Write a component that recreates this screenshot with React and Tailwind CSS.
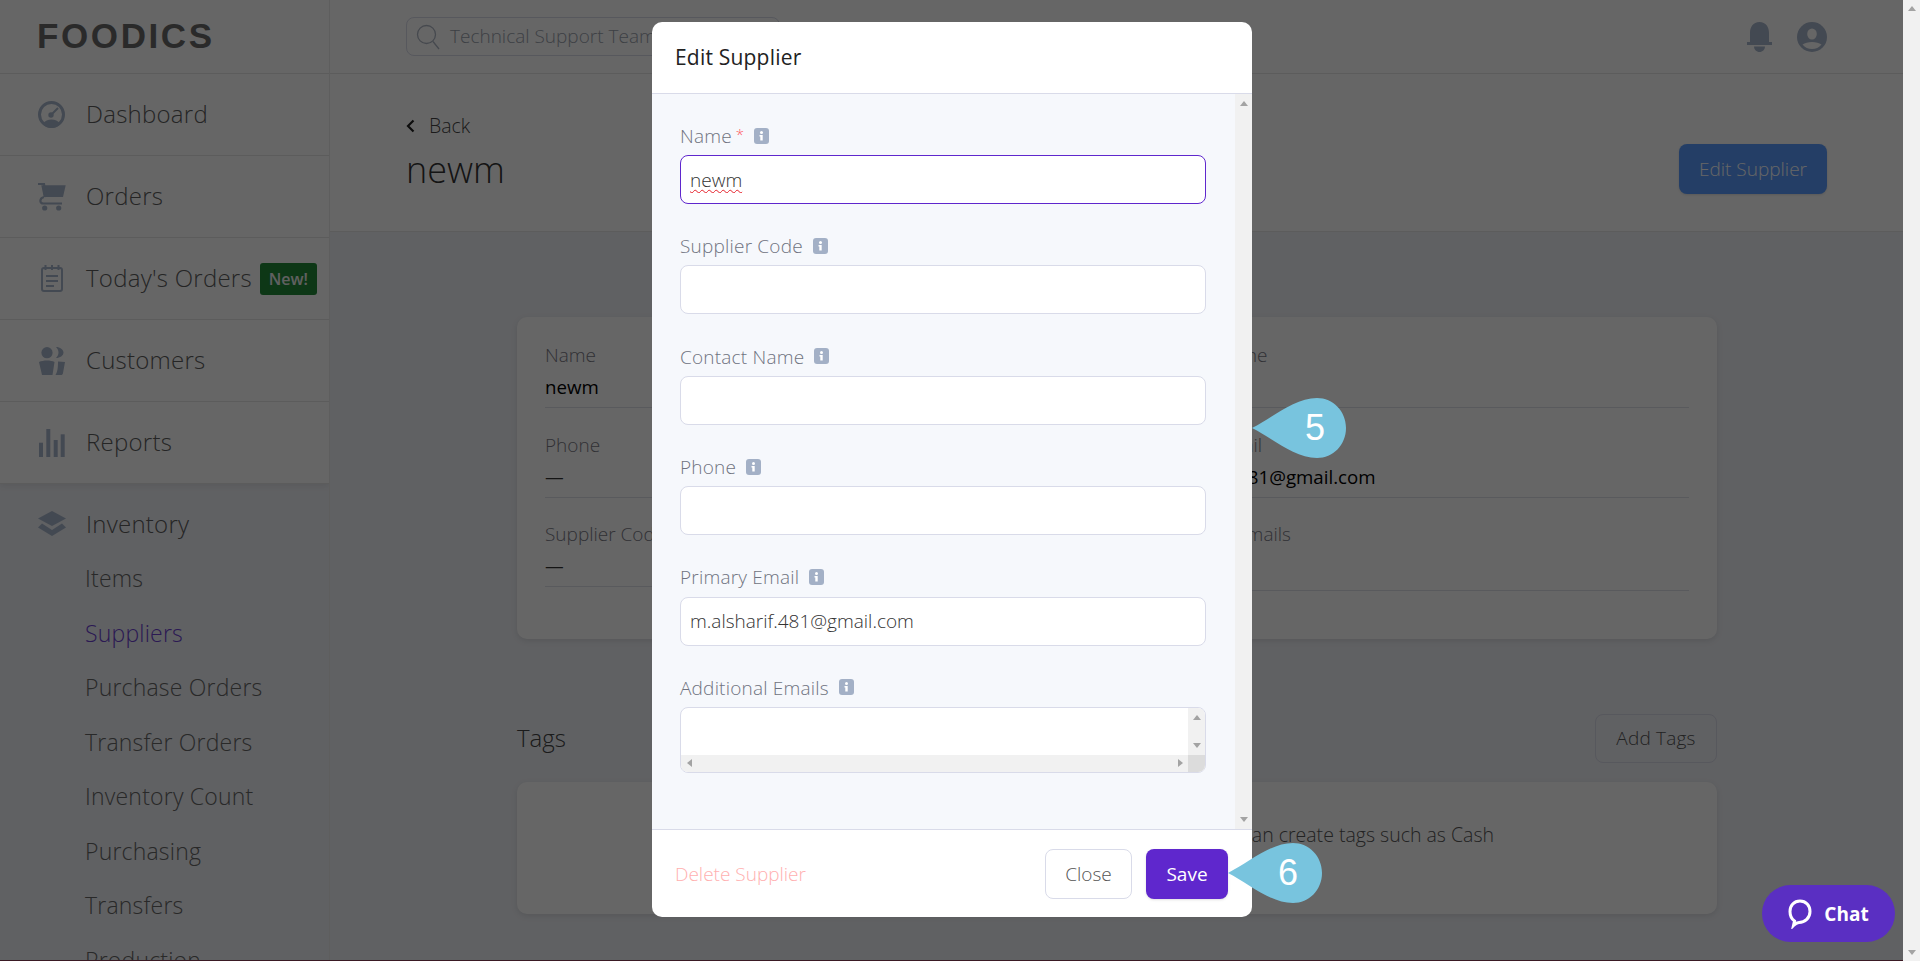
import React from 'react'

const font = { fontFamily: '"Open Sans", sans-serif' }

function InfoIcon() {
    return (
        <svg width="15" height="16" viewBox="0 0 15 16" className="shrink-0">
            <rect width="15" height="16" rx="3" fill="#a3b0c6" />
            <circle cx="7.5" cy="4.4" r="1.5" fill="#fff" />
            <path d="M5.5 7h3.2v5.6h-2.4V8.4H5.5z" fill="#fff" />
        </svg>
    )
}

function DashboardIcon() {
    return (
        <svg width="28" height="28" viewBox="0 0 28 28" fill="none">
            <circle cx="13.500" cy="13.500" r="12" stroke="#a8b6cc" strokeWidth="3" />
            <path d="M5 23c2-3.500 5-4.500 8.500-4.500S20 19.500 22 23c-2.500 3-5.500 4-8.500 4S7.500 26 5 23z" fill="#a8b6cc" />
            <path d="M13 14l7-7" stroke="#a8b6cc" strokeWidth="2" />
            <circle cx="13" cy="14" r="2.700" fill="#a8b6cc" />
        </svg>
    )
}

function CartIcon() {
    return (
        <svg width="28" height="28" viewBox="0 0 28 28" fill="none">
            <path d="M3.300 2.300H27.700L25 14H5.700z" fill="#a8b6cc" />
            <path d="M0 1h6l2 13M6 14c-4.500 1-5 6.500-.5 6.500H24" stroke="#a8b6cc" strokeWidth="2.200" />
            <circle cx="6.700" cy="25" r="2.600" fill="#a8b6cc" />
            <circle cx="20.700" cy="25" r="2.600" fill="#a8b6cc" />
        </svg>
    )
}

function TodayIcon() {
    return (
        <svg width="22" height="28" viewBox="0 0 22 28" fill="none" stroke="#a8b6cc" strokeWidth="2">
            <rect x="1" y="3" width="20" height="23" rx="2" />
            <path d="M4.500 0v5M11 0v5M17.500 0v5M5 11h12M5 16h12M5 21h8" />
        </svg>
    )
}

function CustomersIcon() {
    return (
        <svg width="26" height="28" viewBox="0 0 26 28" fill="#a8b6cc">
            <circle cx="8" cy="5.700" r="5.600" />
            <path d="M17 0c4 0 7.500 2.500 7.500 5.500S21 11 17 11c1.500-1.500 2.500-3.500 2.500-5.500S18.500 1.500 17 0z" />
            <path d="M0 15c4-2 12-2 15.500 0l-2 13H3z" />
            <path d="M19 14.500l7 .5-2 11c-.2 1.500-1 2-2 2h-5.500c2-3 2.500-7 2.500-13.500z" />
        </svg>
    )
}

function ReportsIcon() {
    return (
        <svg width="26" height="28" viewBox="0 0 26 28" fill="#a8b6cc">
            <rect x="0" y="13.700" width="4" height="14.300" />
            <rect x="7.300" y="0" width="4" height="28" />
            <rect x="14.700" y="11" width="4" height="17" />
            <rect x="21.700" y="5.300" width="4" height="22.700" />
        </svg>
    )
}

function LayersIcon() {
    return (
        <svg width="28" height="25" viewBox="0 0 28 25" fill="#a8b6cc">
            <path d="M14 0l14 7.500-14 7.500L0 7.500z" />
            <path d="M4 12.500L0 16.500 14 25l14-8.500-4-4L14 19z" />
        </svg>
    )
}

function Teardrop({ digit, digitClass }) {
    return (
        <>
            <svg width="94" height="60" viewBox="0 0 94 60">
                <path d="M0 30C20 20 42 0 65 0c16 0 29 13 29 30S81 60 65 60C42 60 20 40 0 30z" fill="#78c4de" />
            </svg>
            <span className={`absolute top-[9px] w-[36px] text-center text-[36px] leading-[42px] text-white ${digitClass}`} style={{ fontFamily: '"Liberation Sans", sans-serif' }}>{digit}</span>
        </>
    )
}

function NavRow({ icon, label, badge }) {
    return (
        <div className="flex h-[82px] items-center border-b border-[#e6e6e6]">
            <div className="flex w-[86px] shrink-0 justify-start pl-[38px]">{icon}</div>
            <span className="-mt-[2px] text-[24px] font-light tracking-[0.25px] text-[#5c5c5c]">{label}</span>
            {badge && (
                <span className="ml-[8px] flex h-[32px] w-[57px] items-center justify-center rounded-[3px] bg-[#218a39] text-[16px] font-semibold text-[#f0f0f0]">{badge}</span>
            )}
        </div>
    )
}

function SubRow({ label, active }) {
    return (
        <div className={`flex h-[54.5px] shrink-0 items-center pl-[85px] text-[23px] font-light tracking-[0.2px] ${active ? 'text-[#6b3fd0]' : 'text-[#666666]'}`}>
            {label}
        </div>
    )
}

function InfoCell({ label, value, dark, tall }) {
    return (
        <div className={`mb-[25.500px] border-b border-[#dfe0e8] ${tall ? 'h-[68px]' : 'h-[64px]'}`}>
            <div className="h-[22px] text-[19px] font-light leading-[22px] text-[#7a7a85]">{label}</div>
            <div className={`mt-[10px] h-[22px] text-[18.700px] leading-[22px] ${dark ? 'text-black' : 'text-[#333]'}`}>{value}</div>
        </div>
    )
}

function Field({ label, required, children }) {
    return (
        <div className="mb-[31.400px]">
            <div className="mb-[6px] flex h-[24px] items-center text-[19px] font-light tracking-[0.2px] text-[#6f7380]">
                <span className="-mt-[2px]">{label}</span>
                {required && <span className="ml-[4px] -mt-[5px] text-[15px] text-[#ff5a5f]">*</span>}
                <span className="ml-[10px] -mt-[3px]"><InfoIcon /></span>
            </div>
            {children}
        </div>
    )
}

function TextInput({ value, focused }) {
    return (
        <input
            readOnly
            value={value || ''}
            className={`block h-[49px] w-full rounded-[8px] border bg-white px-[9px] text-[19px] font-light text-[#333] outline-none ${focused ? 'border-[#5f27cd] underline decoration-wavy decoration-[#e5202a] decoration-1 underline-offset-2' : 'border-[#d9dbe9]'}`}
        />
    )
}

function App() {
    return (
        <div className="relative flex h-[961px] w-full overflow-hidden bg-white" style={font}>
            <div className="relative flex min-w-0 flex-1">
                <aside className="flex h-[961px] w-[330px] shrink-0 flex-col overflow-hidden border-r border-[#ebebeb] bg-[#f0f2f7]">
                    <div className="bg-white shadow-[0_2px_6px_rgba(0,0,0,0.08)]">
                        <div className="flex h-[74px] items-center border-b border-[#e6e6e6] pl-[37px]">
                            <span className="-mt-[2px] text-[35px] font-extrabold leading-none tracking-[2.600px] text-[#6a6a6a]" style={{ fontFamily: '"Liberation Sans", sans-serif' }}>FOODICS</span>
                        </div>
                        <NavRow icon={<DashboardIcon />} label="Dashboard" />
                        <NavRow icon={<CartIcon />} label="Orders" />
                        <NavRow icon={<span className="ml-[3px] block"><TodayIcon /></span>} label="Today's Orders" badge="New!" />
                        <NavRow icon={<span className="ml-[1px] block"><CustomersIcon /></span>} label="Customers" />
                        <NavRow icon={<span className="ml-[1px] block"><ReportsIcon /></span>} label="Reports" />
                    </div>
                    <div className="flex flex-col pt-[12.500px]">
                        <div className="flex h-[54.5px] shrink-0 items-center">
                            <div className="flex w-[86px] shrink-0 justify-start pl-[38px]"><LayersIcon /></div>
                            <span className="text-[24px] font-light tracking-[0.25px] text-[#5c5c5c]">Inventory</span>
                        </div>
                        {['Items', 'Suppliers', 'Purchase Orders', 'Transfer Orders', 'Inventory Count', 'Purchasing', 'Transfers', 'Production'].map(label => (
                            <SubRow key={label} label={label} active={label === 'Suppliers'} />
                        ))}
                    </div>
                </aside>

                <main className="flex min-w-0 flex-1 flex-col bg-[#f0f2f7]">
                    <header className="flex h-[74px] shrink-0 items-center justify-between border-b border-[#e6e6e6] bg-white pl-[76px] pr-[76px]">
                        <div className="flex h-[39px] w-[374px] items-center rounded-[8px] border border-[#d9dbe9] pl-[9px]">
                            <svg width="24" height="26" viewBox="0 0 24 26" fill="none" stroke="#aeb6c4" strokeWidth="1.300">
                                <circle cx="10.500" cy="10.500" r="9" />
                                <path d="M17 17.500l6 7.500" />
                            </svg>
                            <span className="ml-[10px] text-[19px] font-light text-[#9aa0ab]">Technical Support Team</span>
                        </div>
                        <div className="flex items-center gap-[25px]">
                            <svg width="25" height="30" viewBox="0 0 25 30" fill="#a8b6cc">
                                <path d="M12.500 0C19 0 22 5 22 11v9l3 0v3H0v-3l3 0V11C3 5 6 0 12.500 0z" />
                                <path d="M7 24.500h11c0 3-2.500 5.500-5.500 5.500S7 27.500 7 24.500z" />
                            </svg>
                            <svg width="30" height="30" viewBox="0 0 30 30">
                                <circle cx="15" cy="15" r="15" fill="#a8b6cc" />
                                <ellipse cx="15" cy="12" rx="4.800" ry="5.500" fill="#fff" />
                                <path d="M5.500 22.500c2.500-1.500 5.500-2.500 9.500-2.500s7 1 9.500 2.500C22 25.500 18.800 27 15 27s-7-1.500-9.500-4.500z" fill="#fff" />
                            </svg>
                        </div>
                    </header>

                    <div className="flex h-[158px] shrink-0 items-center justify-between border-b border-[#e6e6e6] bg-white pl-[76px] pr-[76px]">
                        <div className="mt-[1px]">
                            <div className="flex items-center text-[19.500px] font-light text-[#444]">
                                <svg width="9" height="14" viewBox="0 0 9 14" fill="none" stroke="#222" strokeWidth="2.200">
                                    <path d="M7.500 1.500L2 7l5.500 5.500" />
                                </svg>
                                <span className="ml-[14px]">Back</span>
                            </div>
                            <div className="mt-[4px] text-[36px] font-light leading-[50px] text-[#333]">newm</div>
                        </div>
                        <button className="mt-[32px] h-[50px] w-[148px] rounded-[8px] bg-[#5a9cff] pt-[2px] text-[19px] font-light text-white shadow-sm">Edit Supplier</button>
                    </div>

                    <div className="flex flex-1 flex-col pl-[187px] pr-[186px] pt-[85px]">
                        <div className="h-[322px] rounded-[10px] bg-white px-[28px] pt-[27px] shadow-[0_2px_6px_rgba(0,0,0,0.1)]">
                            <div className="grid grid-cols-2 gap-x-[57px]">
                                <InfoCell label="Name" value="newm" dark />
                                <InfoCell label="Contact Name" value="" />
                                <InfoCell label="Phone" value="—" />
                                <InfoCell label="Primary Email" value="m.alsharif.481@gmail.com" dark />
                                <InfoCell label="Supplier Code" value="—" />
                                <InfoCell label="Additional Emails" value="" tall />
                            </div>
                        </div>
                        <div className="mt-[75px] flex h-[49px] items-center justify-between">
                            <span className="-mt-[2px] text-[24px] font-light text-[#444]">Tags</span>
                            <button className="h-[49px] w-[122px] rounded-[8px] border border-[#d9dbe9] text-[19px] font-light tracking-[0.2px] text-[#555]">Add Tags</button>
                        </div>
                        <div className="mt-[19px] flex h-[132px] justify-end rounded-[10px] bg-white pr-[223px] pt-[38px] shadow-[0_2px_6px_rgba(0,0,0,0.1)]">
                            <span className="whitespace-nowrap text-[19.500px] font-light text-[#555]">You can create tags such as Cash</span>
                        </div>
                    </div>
                </main>

                <div className="absolute inset-0 bg-black/60" />

                <div className="absolute left-[652px] top-[22px] flex h-[895px] w-[600px] flex-col overflow-hidden rounded-[10px] bg-white">
                    <div className="flex h-[72px] shrink-0 items-center border-b border-[#d9dbe9] pl-[23px] text-[21px] tracking-[0.2px] text-[#222]">Edit Supplier</div>
                    <div className="flex min-h-0 flex-1 bg-[#f6f8fc]">
                        <div className="min-w-0 flex-1 pl-[28px] pr-[29px] pt-[31px]">
                            <Field label="Name" required><TextInput value="newm" focused /></Field>
                            <Field label="Supplier Code"><TextInput /></Field>
                            <Field label="Contact Name"><TextInput /></Field>
                            <Field label="Phone"><TextInput /></Field>
                            <Field label="Primary Email"><TextInput value="m.alsharif.481@gmail.com" /></Field>
                            <Field label="Additional Emails">
                                <div className="relative h-[66px] overflow-hidden rounded-[8px] border border-[#d9dbe9] bg-white">
                                    <div className="absolute bottom-0 right-0 top-0 flex w-[17px] flex-col items-center justify-between bg-[#f1f1f1] py-[7px] pb-[24px]">
                                        <span className="h-0 w-0 border-x-[4px] border-b-[5px] border-x-transparent border-b-[#a3a3a3]" />
                                        <span className="h-0 w-0 border-x-[4px] border-t-[5px] border-x-transparent border-t-[#a3a3a3]" />
                                    </div>
                                    <div className="absolute bottom-0 left-0 right-0 flex h-[17px] items-center justify-between bg-[#f1f1f1] pl-[6px] pr-[22px]">
                                        <span className="h-0 w-0 border-y-[4px] border-r-[5px] border-y-transparent border-r-[#a3a3a3]" />
                                        <span className="h-0 w-0 border-y-[4px] border-l-[5px] border-y-transparent border-l-[#a3a3a3]" />
                                    </div>
                                    <div className="absolute bottom-0 right-0 h-[17px] w-[17px] bg-[#dcdcdc]" />
                                </div>
                            </Field>
                        </div>
                        <div className="flex w-[17px] shrink-0 flex-col items-center justify-between bg-[#f1f1f1] py-[7px]">
                            <span className="h-0 w-0 border-x-[4px] border-b-[5px] border-x-transparent border-b-[#a3a3a3]" />
                            <span className="h-0 w-0 border-x-[4px] border-t-[5px] border-x-transparent border-t-[#a3a3a3]" />
                        </div>
                    </div>
                    <div className="flex h-[88px] shrink-0 items-center justify-between border-t border-[#d9dbe9] pl-[23px] pr-[24px]">
                        <span className="mt-[2px] text-[19px] font-light text-[#ffb0b0]">Delete Supplier</span>
                        <div className="flex gap-[14px]">
                            <button className="h-[50px] w-[87px] rounded-[8px] border border-[#d9dbe9] bg-white pt-[2px] text-[19px] font-light text-[#555]">Close</button>
                            <button className="h-[50px] w-[82px] rounded-[8px] bg-[#5f27cd] pt-[2px] text-[19px] text-white shadow-sm">Save</button>
                        </div>
                    </div>
                </div>

                <div className="absolute left-[1252px] top-[398px] h-[60px] w-[94px]"><Teardrop digit="5" digitClass="left-[45px]" /></div>
                <div className="absolute left-[1228px] top-[843px] h-[60px] w-[94px]"><Teardrop digit="6" digitClass="left-[42px]" /></div>

                <div className="absolute left-[1762px] top-[885px] flex h-[57px] w-[133px] items-center justify-center gap-[12px] rounded-[29px] bg-[#5a2fc2] pt-[1px] text-[19px] font-bold text-white">
                    <svg width="24" height="30" viewBox="0 0 24 30" fill="none" stroke="#fff" strokeWidth="3">
                        <path d="M12 2c6 0 10 4.500 10 10.500 0 6.500-5 11-11 11-2 0-3.500 1-5.500 3l1-4.500C3.500 20 2 16.500 2 12.500 2 6.500 6 2 12 2z" />
                    </svg>
                    <span>Chat</span>
                </div>
                <div className="absolute bottom-0 left-0 right-0 h-px bg-[#3a1a24]" />
            </div>

            <div className="flex w-[17px] shrink-0 flex-col items-center justify-between bg-[#f1f1f1] py-[6px]">
                <span className="h-0 w-0 border-x-[4px] border-b-[5px] border-x-transparent border-b-[#a3a3a3]" />
                <span className="h-0 w-0 border-x-[4px] border-t-[5px] border-x-transparent border-t-[#a3a3a3]" />
            </div>
        </div>
    )
}

export default App
